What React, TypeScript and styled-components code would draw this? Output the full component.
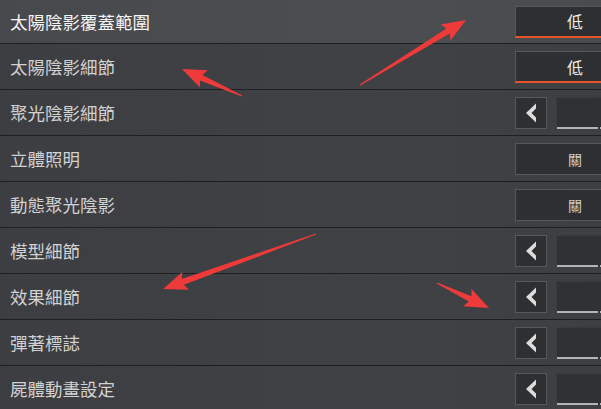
import styled, { createGlobalStyle } from "styled-components";

type Setting = {
  label: string;
  kind: "toggle" | "stepper";
  value?: string;
  accent?: boolean;
};

const SETTINGS: Setting[] = [
  { label: "太陽陰影覆蓋範圍", kind: "toggle", value: "低", accent: true },
  { label: "太陽陰影細節", kind: "toggle", value: "低", accent: true },
  { label: "聚光陰影細節", kind: "stepper" },
  { label: "立體照明", kind: "toggle", value: "關" },
  { label: "動態聚光陰影", kind: "toggle", value: "關" },
  { label: "模型細節", kind: "stepper" },
  { label: "效果細節", kind: "stepper" },
  { label: "彈著標誌", kind: "stepper" },
  { label: "屍體動畫設定", kind: "stepper" },
];

// annotation arrows: [tailX, tailY, tipX, tipY]
const ARROWS: [number, number, number, number][] = [
  [360, 85, 466, 20],
  [242, 96, 182, 69],
  [316, 234, 163, 289],
  [437, 283, 489, 308],
];

const arrowPoints = (x1: number, y1: number, x2: number, y2: number) => {
  const len = Math.hypot(x2 - x1, y2 - y1);
  const dx = (x2 - x1) / len;
  const dy = (y2 - y1) / len;
  const nx = -dy;
  const ny = dx;
  const head = 21;
  const bx = x2 - dx * head;
  const by = y2 - dy * head;
  const pt = (x: number, y: number) => `${x.toFixed(1)},${y.toFixed(1)}`;
  return [
    pt(x1 + nx * 0.6, y1 + ny * 0.6),
    pt(bx + nx * 3, by + ny * 3),
    pt(bx - dx * 3 + nx * 9.5, by - dy * 3 + ny * 9.5),
    pt(x2, y2),
    pt(bx - dx * 3 - nx * 9.5, by - dy * 3 - ny * 9.5),
    pt(bx - nx * 3, by - ny * 3),
    pt(x1 - nx * 0.6, y1 - ny * 0.6),
  ].join(" ");
};

const App = () => {
  return (
    <>
      <GlobalStyle />
      <Page>
        <List>
          {SETTINGS.map((s, i) => (
            <Row key={s.label} $first={i === 0}>
              <Label $active={i === 0}>{s.label}</Label>
              {s.kind === "toggle" ? (
                <ValueBox $accent={!!s.accent}>{s.value}</ValueBox>
              ) : (
                <Stepper>
                  <ArrowButton>
                    <svg width="12" height="20" viewBox="0 0 12 20">
                      <polygon
                        points="11,0.5 1,10 11,19.5 11,14.5 6.5,10 11,5.5"
                        fill="#dcdcdc"
                      />
                    </svg>
                  </ArrowButton>
                  <StepValue>
                    <Track>
                      <Segment />
                      <Segment $short />
                    </Track>
                  </StepValue>
                </Stepper>
              )}
            </Row>
          ))}
        </List>
        <Overlay width="601" height="409" viewBox="0 0 601 409">
          {ARROWS.map((a, i) => (
            <polygon key={i} points={arrowPoints(...a)} fill="#ef3a3a" />
          ))}
        </Overlay>
      </Page>
    </>
  );
};

export default App;

const GlobalStyle = createGlobalStyle`
  html, body {
    margin: 0;
    padding: 0;
    background: #3e3f43;
    overflow: hidden;
  }
`;

const Page = styled.div`
  position: relative;
  width: 601px;
  height: 409px;
  overflow: hidden;
  background: #3e3f43;
  font-family: "Noto Sans CJK TC", "Noto Sans", sans-serif;
`;

const List = styled.div`
  display: flex;
  flex-direction: column;
`;

const Row = styled.div<{ $first: boolean }>`
  display: flex;
  align-items: center;
  justify-content: space-between;
  box-sizing: border-box;
  height: ${({ $first }) => ($first ? "44px" : "46px")};
  padding-left: 10px;
  padding-top: ${({ $first }) => ($first ? "0" : "1px")};
  border-bottom: 1px solid #1e1f21;
  background: ${({ $first }) =>
    $first
      ? "linear-gradient(90deg, #48494d 0%, #4c4d51 60%, #4a4b4f 100%)"
      : "linear-gradient(90deg, #3d3e42 0%, #404145 60%, #3e3f43 100%)"};
`;

const Label = styled.span<{ $active: boolean }>`
  font-size: 17.5px;
  line-height: 1;
  color: ${({ $active }) => ($active ? "#f4f4f4" : "#d2d2d2")};
  font-weight: 400;
`;

const ValueBox = styled.div<{ $accent: boolean }>`
  box-sizing: border-box;
  width: 120px;
  height: 32px;
  margin-right: -34px;
  display: flex;
  align-items: center;
  justify-content: center;
  background: #2e2f32;
  border: 1px solid #56585b;
  border-bottom: ${({ $accent }) =>
    $accent ? "2px solid #e8542a" : "1px solid #56585b"};
  color: ${({ $accent }) => ($accent ? "#f0f0f0" : "#cfcfcf")};
  font-size: ${({ $accent }) => ($accent ? "16px" : "14px")};
`;

const Stepper = styled.div`
  display: flex;
  align-items: center;
  gap: 9px;
  margin-right: -34px;
`;

const ArrowButton = styled.div`
  box-sizing: border-box;
  width: 32px;
  height: 32px;
  display: flex;
  align-items: center;
  justify-content: center;
  background: #2e2f31;
  border: 1px solid #56585b;
`;

const StepValue = styled.div`
  box-sizing: border-box;
  width: 79px;
  height: 32px;
  display: flex;
  align-items: flex-end;
  background: #303134;
  border-top: 1px solid #3a3b3e;
  border-left: 1px solid #3a3b3e;
`;

const Track = styled.div`
  display: flex;
  gap: 2px;
  width: 100%;
`;

const Segment = styled.div<{ $short?: boolean }>`
  height: 2px;
  width: ${({ $short }) => ($short ? "34px" : "41px")};
  background: #b4b4b4;
`;

const Overlay = styled.svg`
  position: absolute;
  left: 0;
  top: 0;
  pointer-events: none;
`;
